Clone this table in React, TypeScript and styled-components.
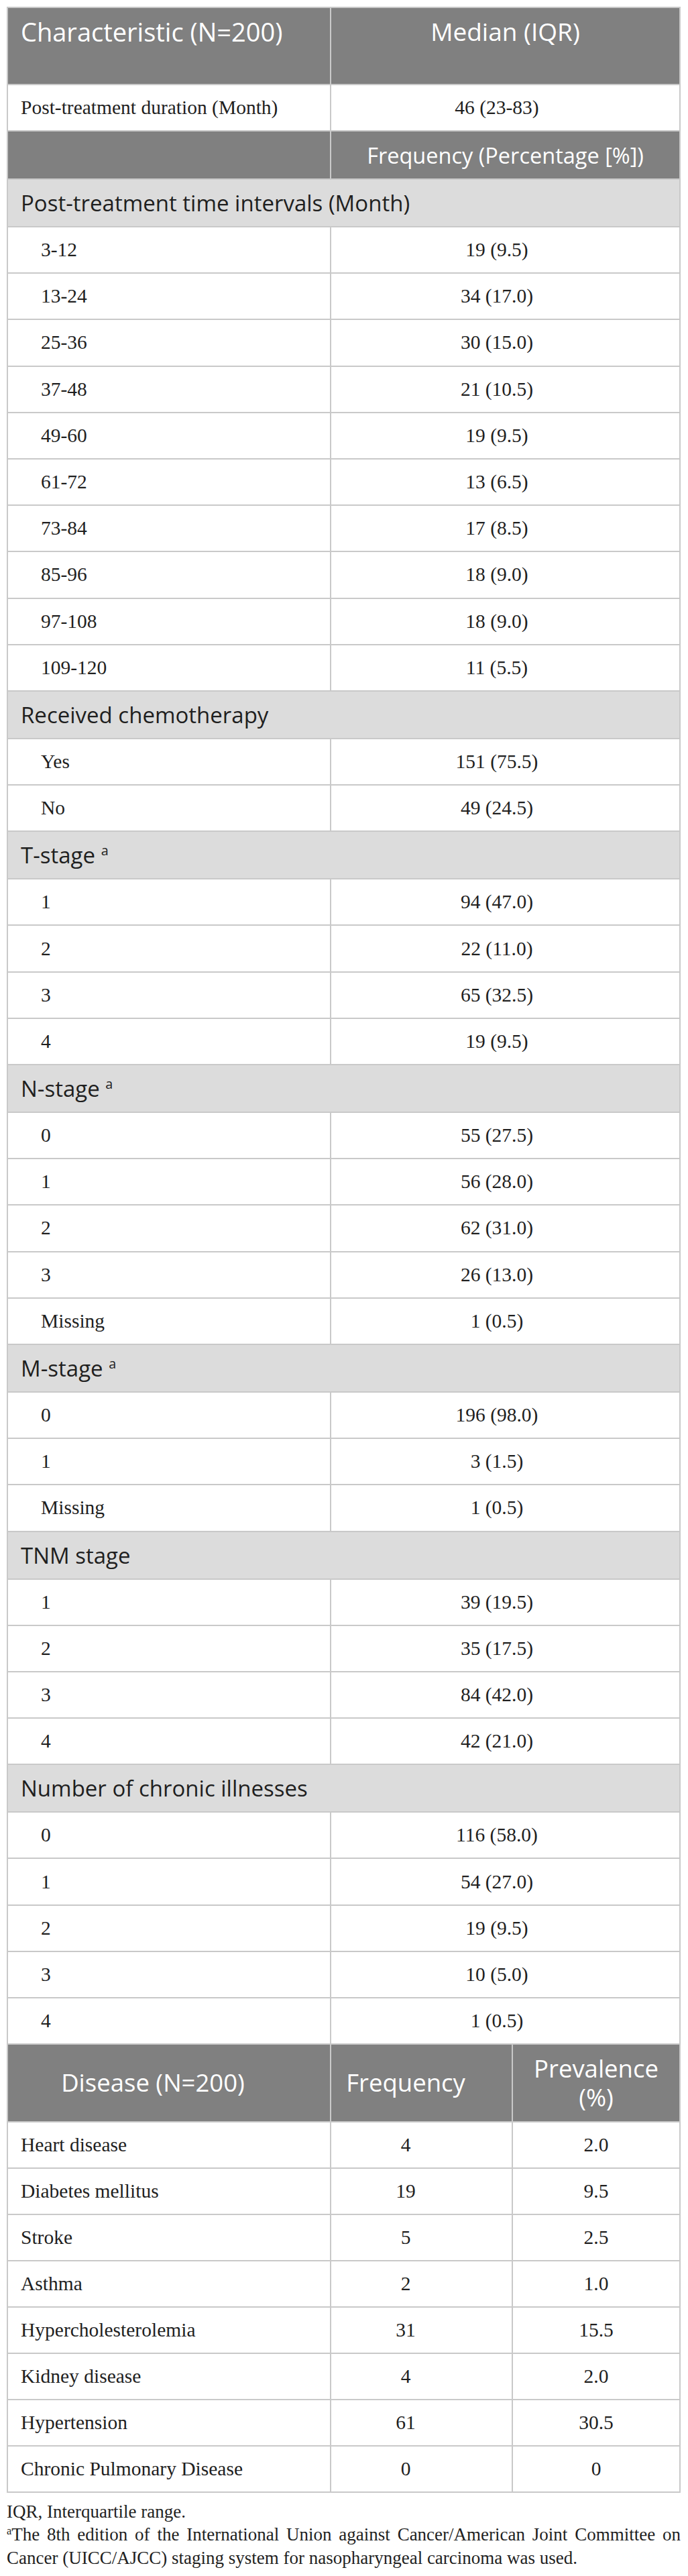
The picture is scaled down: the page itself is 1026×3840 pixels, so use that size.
import React from "react";
import styled, { createGlobalStyle } from "styled-components";

const GlobalStyle = createGlobalStyle`
  html, body { margin: 0; padding: 0; background: #ffffff; }
  * { box-sizing: border-box; }
`;

const SANS = `"Open Sans", "Noto Sans", Arial, sans-serif`;
const SERIF = `"Liberation Serif", "Times New Roman", serif`;
const BORDER = "#c9c9c9";
const HEAD_BG = "#808080";
const SECTION_BG = "#dcdcdc";
const TEXT = "#1f1f1f";

const Page = styled.div`
  width: 1026px;
  padding: 10px 11px 40px 10px;
`;

const Table = styled.div`
  display: flex;
  flex-direction: column;
  border-left: 2px solid ${BORDER};
  border-right: 2px solid ${BORDER};
`;

const FirstTable = styled(Table)`
  border-top: 2px solid ${BORDER};
`;

type RowKind = "top" | "plain" | "freq" | "section" | "data" | "dhead" | "drow";

const heights: Record<RowKind, number> = {
  top: 115,
  plain: 69,
  freq: 72,
  section: 71,
  data: 69.2,
  dhead: 115.5,
  drow: 69.1,
};

const Row = styled.div<{ $kind: RowKind; $cols: string }>`
  display: grid;
  grid-template-columns: ${(p) => p.$cols};
  height: ${(p) => heights[p.$kind]}px;
  border-bottom: 2px solid ${BORDER};
  background: ${(p) =>
    p.$kind === "top" || p.$kind === "freq" || p.$kind === "dhead"
      ? HEAD_BG
      : p.$kind === "section"
      ? SECTION_BG
      : "#ffffff"};
`;

const HeadCell = styled.div<{
  $center?: boolean;
  $top?: boolean;
  $size: number;
  $pl?: number;
  $pr?: number;
  $divider?: boolean;
}>`
  display: flex;
  align-items: ${(p) => (p.$top ? "flex-start" : "center")};
  justify-content: ${(p) => (p.$center ? "center" : "flex-start")};
  text-align: ${(p) => (p.$center ? "center" : "left")};
  padding: ${(p) => (p.$top ? "12px" : "0")} ${(p) => p.$pr ?? 0}px 0
    ${(p) => p.$pl ?? (p.$center ? 0 : 19)}px;
  border-left: ${(p) => (p.$divider ? `2px solid ${BORDER}` : "none")};
  font-family: ${SANS};
  font-size: ${(p) => p.$size}px;
  line-height: ${(p) => (p.$top ? 46 : 43)}px;
  color: #ffffff;
`;

const SectionCell = styled.div`
  grid-column: 1 / -1;
  display: flex;
  align-items: center;
  padding-left: 19px;
  font-family: ${SANS};
  font-size: 33px;
  color: ${TEXT};
  white-space: nowrap;
`;

const BodyCell = styled.div<{ $center?: boolean; $indent?: boolean; $pr?: number; $divider?: boolean }>`
  display: flex;
  align-items: center;
  justify-content: ${(p) => (p.$center ? "center" : "flex-start")};
  padding: 0 ${(p) => p.$pr ?? 0}px 0 ${(p) => (p.$center ? 0 : p.$indent ? 49 : 19)}px;
  border-left: ${(p) => (p.$divider ? `2px solid ${BORDER}` : "none")};
  font-family: ${SERIF};
  font-size: 29.5px;
  color: ${TEXT};
  white-space: nowrap;
`;

const Sup = styled.sup`
  font-size: 0.6em;
  line-height: 0;
  vertical-align: 0.62em;
`;

const FootSup = styled.sup`
  font-size: 0.6em;
  line-height: 0;
  vertical-align: 0.55em;
`;

const Notes = styled.div`
  margin-top: 10.5px;
  font-family: ${SERIF};
  font-size: 27px;
  line-height: 34.5px;
  color: ${TEXT};
`;

const Note = styled.p`
  margin: 0;
  text-align: justify;
`;

const COLS2 = "480px 1fr";
const COLS3 = "480px 271px 1fr";

type Group = { title: React.ReactNode; rows: [string, string][] };

const groups: Group[] = [
  {
    title: "Post-treatment time intervals (Month)",
    rows: [
      ["3-12", "19 (9.5)"],
      ["13-24", "34 (17.0)"],
      ["25-36", "30 (15.0)"],
      ["37-48", "21 (10.5)"],
      ["49-60", "19 (9.5)"],
      ["61-72", "13 (6.5)"],
      ["73-84", "17 (8.5)"],
      ["85-96", "18 (9.0)"],
      ["97-108", "18 (9.0)"],
      ["109-120", "11 (5.5)"],
    ],
  },
  {
    title: "Received chemotherapy",
    rows: [
      ["Yes", "151 (75.5)"],
      ["No", "49 (24.5)"],
    ],
  },
  {
    title: (
      <>
        T-stage <Sup>a</Sup>
      </>
    ),
    rows: [
      ["1", "94 (47.0)"],
      ["2", "22 (11.0)"],
      ["3", "65 (32.5)"],
      ["4", "19 (9.5)"],
    ],
  },
  {
    title: (
      <>
        N-stage <Sup>a</Sup>
      </>
    ),
    rows: [
      ["0", "55 (27.5)"],
      ["1", "56 (28.0)"],
      ["2", "62 (31.0)"],
      ["3", "26 (13.0)"],
      ["Missing", "1 (0.5)"],
    ],
  },
  {
    title: (
      <>
        M-stage <Sup>a</Sup>
      </>
    ),
    rows: [
      ["0", "196 (98.0)"],
      ["1", "3 (1.5)"],
      ["Missing", "1 (0.5)"],
    ],
  },
  {
    title: "TNM stage",
    rows: [
      ["1", "39 (19.5)"],
      ["2", "35 (17.5)"],
      ["3", "84 (42.0)"],
      ["4", "42 (21.0)"],
    ],
  },
  {
    title: "Number of chronic illnesses",
    rows: [
      ["0", "116 (58.0)"],
      ["1", "54 (27.0)"],
      ["2", "19 (9.5)"],
      ["3", "10 (5.0)"],
      ["4", "1 (0.5)"],
    ],
  },
];

const diseases: [string, string, string][] = [
  ["Heart disease", "4", "2.0"],
  ["Diabetes mellitus", "19", "9.5"],
  ["Stroke", "5", "2.5"],
  ["Asthma", "2", "1.0"],
  ["Hypercholesterolemia", "31", "15.5"],
  ["Kidney disease", "4", "2.0"],
  ["Hypertension", "61", "30.5"],
  ["Chronic Pulmonary Disease", "0", "0"],
];

export default function App() {
  return (
    <Page>
      <GlobalStyle />
      <FirstTable>
        <Row $kind="top" $cols={COLS2}>
          <HeadCell $top $size={38}>Characteristic (N=200)</HeadCell>
          <HeadCell $top $center $divider $size={37}>Median (IQR)</HeadCell>
        </Row>
        <Row $kind="plain" $cols={COLS2}>
          <BodyCell>Post-treatment duration (Month)</BodyCell>
          <BodyCell $center $divider $pr={25}>46 (23-83)</BodyCell>
        </Row>
        <Row $kind="freq" $cols={COLS2}>
          <HeadCell $size={32.5} />
          <HeadCell $center $divider $size={32.5}>Frequency (Percentage [%])</HeadCell>
        </Row>
        {groups.map((g, gi) => (
          <React.Fragment key={gi}>
            <Row $kind="section" $cols={COLS2}>
              <SectionCell>
                <span>{g.title}</span>
              </SectionCell>
            </Row>
            {g.rows.map(([label, value], ri) => (
              <Row key={ri} $kind="data" $cols={COLS2}>
                <BodyCell $indent>{label}</BodyCell>
                <BodyCell $center $divider $pr={25}>{value}</BodyCell>
              </Row>
            ))}
          </React.Fragment>
        ))}
      </FirstTable>
      <Table>
        <Row $kind="dhead" $cols={COLS3}>
          <HeadCell $center $pr={48} $size={36.5}>Disease (N=200)</HeadCell>
          <HeadCell $center $divider $pr={47} $size={36.5}>Frequency</HeadCell>
          <HeadCell $center $divider $pl={30} $pr={30} $size={36.5}>Prevalence (%)</HeadCell>
        </Row>
        {diseases.map(([name, freq, prev], i) => (
          <Row key={i} $kind="drow" $cols={COLS3}>
            <BodyCell>{name}</BodyCell>
            <BodyCell $center $divider $pr={47}>{freq}</BodyCell>
            <BodyCell $center $divider>{prev}</BodyCell>
          </Row>
        ))}
      </Table>
      <Notes>
        <Note>IQR, Interquartile range.</Note>
        <Note>
          <FootSup>a</FootSup>The 8th edition of the International Union against Cancer/American Joint Committee on
          Cancer (UICC/AJCC) staging system for nasopharyngeal carcinoma was used.
        </Note>
      </Notes>
    </Page>
  );
}
